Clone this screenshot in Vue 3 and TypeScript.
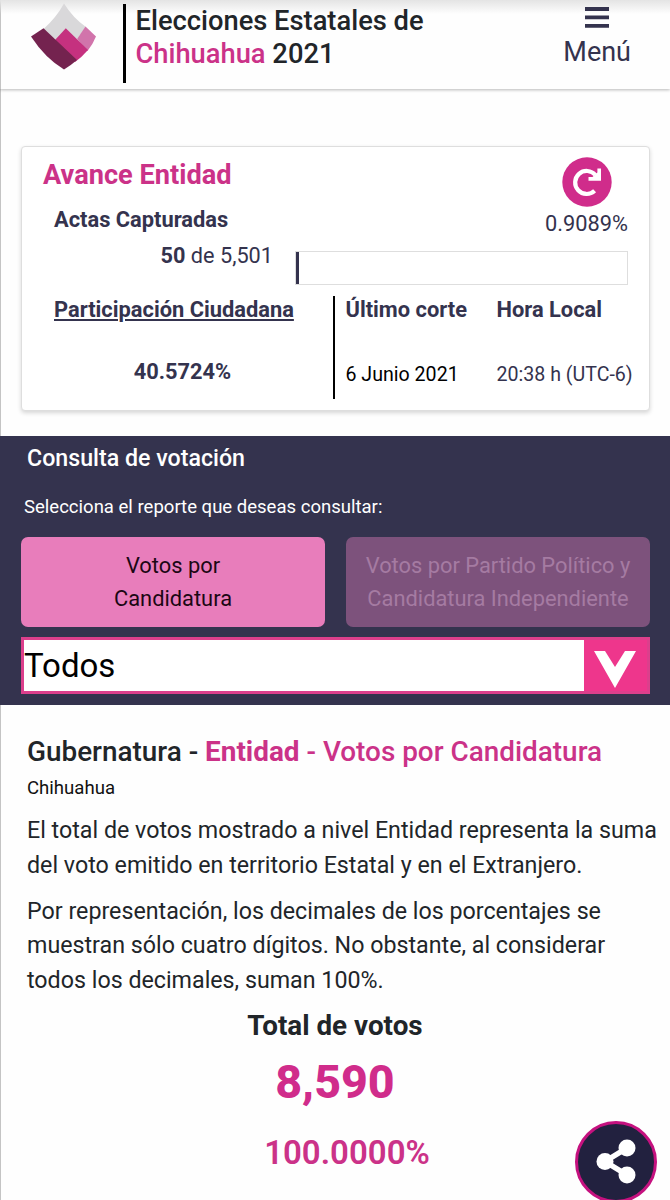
<script setup lang="ts">
interface Report {
  lines: string[]
  active: boolean
}

const reports: Report[] = [
  { lines: ['Votos por', 'Candidatura'], active: true },
  { lines: ['Votos por Partido Político y', 'Candidatura Independiente'], active: false },
]

const progress = 0.9089
</script>

<template>
  <div class="page">
    <header class="header">
      <svg class="logo" width="66" height="67" viewBox="0 0 66 67">
        <path d="M33 -0.5Q42 14 55 23L33 52L12.5 25Q25 14 33 -0.5Z" fill="#d9d8da" />
        <path d="M54.5 22.5L65 32.5Q62 40 56.5 47L46 35Z" fill="#d174ab" />
        <path d="M34.8 24.3L57 46Q51 53 44 58L24 36Z" fill="#c5317f" />
        <path d="M12.5 24.3L46 56Q39 62 33 65.5Q14 54 0 32.5Z" fill="#74234f" />
      </svg>
      <div class="rule"></div>
      <h1 class="title">Elecciones Estatales de<br /><span class="pink">Chihuahua</span> 2021</h1>
      <div class="menu">
        <svg width="24" height="22" viewBox="0 0 24 22">
          <path d="M0 2H24M0 10.3H24M0 18.8H24" stroke="#34334e" stroke-width="3.8" />
        </svg>
        <span>Menú</span>
      </div>
    </header>

    <section class="card">
      <div class="top">
        <div class="top-left">
          <h2>Avance Entidad</h2>
          <h3>Actas Capturadas</h3>
          <p class="count"><b>50</b> de 5,501</p>
        </div>
        <div class="top-right">
          <svg class="refresh" width="50" height="50" viewBox="0 0 50 50">
            <circle cx="25" cy="25" r="24.7" fill="#d02c8b" />
            <path d="M32.6 33.8A11.5 11.5 0 1 1 33.4 18" fill="none" stroke="#fff" stroke-width="4.2" />
            <path d="M35.4 11.5H39V23.7H26.5V20H30.5L35.4 15.5Z" fill="#fff" />
          </svg>
          <span class="percent">0.9089%</span>
          <div class="bar"><div class="fill" :style="{ width: progress + '%' }"></div></div>
        </div>
      </div>
      <div class="bottom">
        <div class="participation">
          <h3><u>Participación Ciudadana</u></h3>
          <p><b>40.5724%</b></p>
        </div>
        <div class="cut">
          <h3>Último corte</h3>
          <p>6 Junio 2021</p>
        </div>
        <div class="hour">
          <h3>Hora Local</h3>
          <p>20:38 h (UTC-6)</p>
        </div>
      </div>
    </section>

    <section class="panel">
      <h2>Consulta de votación</h2>
      <p>Selecciona el reporte que deseas consultar:</p>
      <div class="reports">
        <button v-for="r in reports" :key="r.lines[0]" :class="{ active: r.active }">
          <span v-for="line in r.lines" :key="line">{{ line }}</span>
        </button>
      </div>
      <div class="select">
        <span>Todos</span>
        <div class="arrow">
          <svg width="42" height="37" viewBox="0 0 42 37">
            <path d="M0 0H11L21 16L31 0H42L21 37Z" fill="#fff" />
          </svg>
        </div>
      </div>
    </section>

    <main class="results">
      <h2>Gubernatura - <span class="pink"><b>Entidad</b> - Votos por Candidatura</span></h2>
      <p class="place">Chihuahua</p>
      <p class="text">El total de votos mostrado a nivel Entidad representa la suma<br />del voto emitido en territorio Estatal y en el Extranjero.</p>
      <p class="text">Por representación, los decimales de los porcentajes se<br />muestran sólo cuatro dígitos. No obstante, al considerar<br />todos los decimales, suman 100%.</p>
      <div class="totals">
        <h3>Total de votos</h3>
        <strong>8,590</strong>
        <em>100.0000%</em>
      </div>
    </main>

    <button class="share" aria-label="Compartir">
      <svg width="40" height="46" viewBox="0 0 40 46">
        <path d="M31 9L9 22.5L31 36" fill="none" stroke="#fff" stroke-width="5.5" />
        <circle cx="31" cy="9" r="8.5" fill="#fff" />
        <circle cx="9" cy="22.5" r="8.5" fill="#fff" />
        <circle cx="31" cy="36" r="8.5" fill="#fff" />
      </svg>
    </button>
  </div>
</template>

<style>
body {
  margin: 0;
  background: #fff;
}
</style>

<style scoped>
.page {
  position: relative;
  box-sizing: border-box;
  width: 670px;
  height: 1200px;
  overflow: hidden;
  background: #fefefe;
  box-shadow: inset 1px 0 #c4c4c4;
  color: #212529;
  font-family: Roboto, "Liberation Sans", sans-serif;
}
h1, h2, h3, p {
  margin: 0;
  white-space: nowrap;
}
button {
  font-family: inherit;
}
.pink {
  color: #cb3288;
}
.header {
  display: flex;
  align-items: flex-start;
  box-sizing: border-box;
  height: 89px;
  padding: 4px 39px 0 31px;
  background: linear-gradient(#e4e4e4, rgba(254, 254, 254, 0) 14px);
  box-shadow: 0 1px 3px rgba(0, 0, 0, 0.28);
}
.logo {
  overflow: visible;
}
.rule {
  width: 3px;
  height: 79px;
  margin-left: 26px;
  background: #000;
}
.title {
  margin: 1px 0 0 9.5px;
  font-size: 27.3px;
  font-weight: 500;
  line-height: 33px;
}
.menu {
  display: flex;
  flex-direction: column;
  align-items: center;
  margin: 3px 0 0 auto;
  color: #34334e;
  font-size: 27px;
  line-height: 32px;
}
.menu span {
  margin-top: 7px;
}
.card {
  box-sizing: border-box;
  width: 629px;
  height: 265px;
  margin: 57px 0 0 21px;
  padding: 0 21px;
  border: 1px solid #dedede;
  border-radius: 4px;
  background: #fff;
  box-shadow: 0 2px 4px rgba(0, 0, 0, 0.16);
  color: #34334e;
}
.top {
  display: flex;
  justify-content: space-between;
  height: 149px;
}
.top-left {
  width: 230px;
  padding-top: 12px;
}
.top-left h2 {
  color: #cb3288;
  font-size: 27.2px;
  font-weight: 700;
  line-height: 32px;
}
.card h3 {
  font-size: 21.85px;
  font-weight: 700;
  line-height: 30px;
}
.top-left h3 {
  margin: 14px 0 0 11px;
}
.count {
  margin-top: 6px;
  text-align: right;
  font-size: 21.7px;
  line-height: 30px;
}
.top-right {
  display: flex;
  flex-direction: column;
  align-items: flex-end;
  width: 333px;
  padding-top: 10px;
}
.refresh {
  margin-right: 16px;
}
.percent {
  margin-top: 2px;
  font-size: 21.8px;
  line-height: 30px;
}
.bar {
  box-sizing: border-box;
  width: 333px;
  height: 34px;
  margin-top: 12px;
  border: 1px solid #dedede;
}
.fill {
  height: 32px;
  background: #34334e;
}
.bottom {
  display: flex;
  height: 103px;
}
.bottom > div {
  flex: none;
}
.participation {
  box-sizing: border-box;
  width: 292px;
  padding-left: 11px;
  border-right: 2px solid #000;
}
.participation p {
  width: 257px;
  margin-top: 32px;
  text-align: center;
  font-size: 21.8px;
  line-height: 30px;
}
.bottom h3 {
  margin-top: -1px;
}
.cut {
  width: 151px;
  padding-left: 10.5px;
}
.cut p,
.hour p {
  margin-top: 35px;
  font-size: 19.6px;
  line-height: 30px;
}
.cut p {
  color: #000;
}
.panel {
  box-sizing: border-box;
  height: 269px;
  margin-top: 25px;
  padding: 7px 20px 0 21px;
  background: #34334e;
  color: #fff;
}
.panel h2 {
  padding-left: 6px;
  font-size: 23.2px;
  font-weight: 500;
  line-height: 30px;
}
.panel p {
  margin-top: 19px;
  padding-left: 3px;
  font-size: 18.55px;
  line-height: 30px;
}
.reports {
  display: flex;
  gap: 21px;
  margin-top: 15px;
}
.reports button {
  display: flex;
  flex: 1 1 0;
  flex-direction: column;
  align-items: center;
  justify-content: center;
  height: 90px;
  padding: 0;
  border: 0;
  border-radius: 7px;
  background: #7d527c;
  color: #a57ba2;
  font-size: 21.85px;
  line-height: 33px;
  white-space: nowrap;
}
.reports button.active {
  background: #e87dbb;
  color: #1c0714;
}
.select {
  display: flex;
  box-sizing: border-box;
  height: 57px;
  margin-top: 10px;
  border: 3px solid #dc3f8c;
  background: #fff;
  color: #000;
}
.select span {
  flex: 1;
  font-size: 33px;
  line-height: 51px;
}
.arrow {
  display: flex;
  align-items: center;
  justify-content: center;
  box-sizing: border-box;
  width: 63px;
  padding: 8px 1px 0 0;
  background: #ee368c;
}
.arrow svg {
  flex: none;
}
.results {
  padding: 30px 0 0 27px;
}
.results h2 {
  font-size: 27.9px;
  font-weight: 500;
  line-height: 34px;
}
.place {
  margin-top: 4px;
  color: #111;
  font-size: 18.6px;
  line-height: 30px;
}
.text {
  margin-top: 11px;
  font-size: 23.24px;
  line-height: 34.8px;
}
.place + .text {
  margin-top: 10px;
}
.totals {
  display: flex;
  flex-direction: column;
  align-items: center;
  width: 616px;
}
.totals h3 {
  margin-top: 12px;
  font-size: 27.8px;
  font-weight: 700;
  line-height: 32px;
}
.totals strong {
  margin-top: 13px;
  color: #d02c8b;
  font-size: 46.6px;
  font-weight: 800;
  line-height: 54px;
}
.totals em {
  margin: 24px 0 0 24px;
  color: #cb3288;
  font-size: 33px;
  font-style: normal;
  font-weight: 600;
  line-height: 40px;
}
.share {
  position: absolute;
  left: 575px;
  top: 1121px;
  display: flex;
  align-items: center;
  justify-content: center;
  box-sizing: border-box;
  width: 82px;
  height: 82px;
  padding: 0;
  border: 3px solid #c5117f;
  border-radius: 50%;
  background: #22213f;
}
</style>
